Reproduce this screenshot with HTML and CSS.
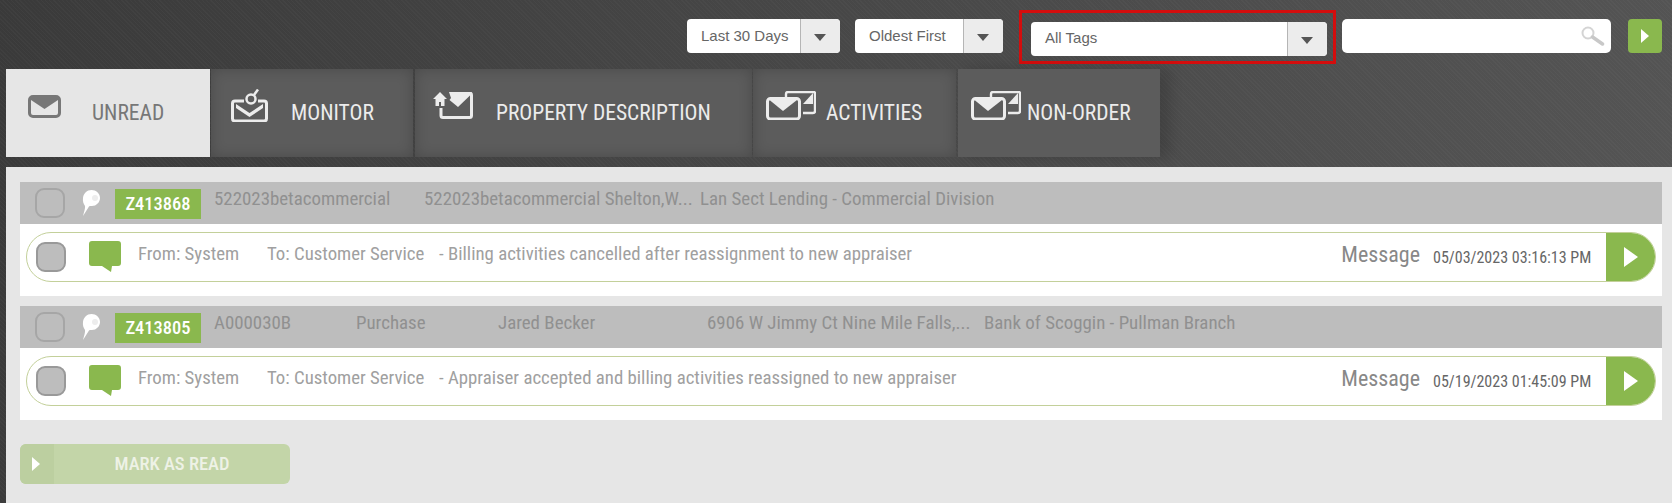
FILE: index.html
```html
<!DOCTYPE html>
<html>
<head>
  <meta charset="utf-8" />
  <title>Inbox</title>
  <link rel="stylesheet" href="styles.css">
</head>
<body>
  <svg class="defs" width="0" height="0">
    <symbol id="mail" viewBox="0 0 33 23">
      <rect x="1.500" y="1.500" width="30" height="20" rx="3.500" fill="none" stroke="currentColor" stroke-width="3"/>
      <path d="M3 3h27v2L16.500 14 3 5z" fill="currentColor"/>
    </symbol>
    <symbol id="mail-pair" viewBox="0 0 50 29">
      <path d="M20 6V3a2 2 0 0 1 2-2h25.500a1.500 1.500 0 0 1 1.500 1.500V20a2 2 0 0 1-2 2H37" fill="none" stroke="currentColor" stroke-width="2.400"/>
      <path d="M37 13L47 2v11z" fill="currentColor"/>
      <rect x="1.500" y="7.500" width="32" height="20.500" rx="3" fill="#5c5c5c" stroke="currentColor" stroke-width="3"/>
      <path d="M3.500 9h27.500L17 20z" fill="currentColor"/>
    </symbol>
    <symbol id="balloon" viewBox="0 0 18 28">
      <path d="M9.500 1C14 1 18 4.500 18 9s-4 8.500-9 8c-1 0-1.500 0-2 .5L1 27c1-4 2.500-8 2-10C1.500 15 .5 12 1 9c.5-4.500 4-8 8.500-8z" fill="#fff"/>
      <circle cx="13" cy="9" r="3" fill="#ededed"/>
    </symbol>
    <symbol id="comment" viewBox="0 0 32 31">
      <path d="M3 0h26a3 3 0 0 1 3 3v19a3 3 0 0 1-3 3h-6l-1 6-9-6H3a3 3 0 0 1-3-3V3a3 3 0 0 1 3-3z" fill="#8ab84e"/>
    </symbol>
  </svg>

  <header class="toolbar">
    <div class="select select-days">
      <span class="select-label">Last 30 Days</span>
      <span class="select-arrow"></span>
    </div>
    <div class="select select-sort">
      <span class="select-label">Oldest First</span>
      <span class="select-arrow"></span>
    </div>
    <div class="highlight">
      <div class="select select-tags">
        <span class="select-label">All Tags</span>
        <span class="select-arrow"></span>
      </div>
    </div>
    <div class="search">
      <svg class="search-icon" viewBox="0 0 26 20" width="26" height="20">
        <circle cx="8" cy="7" r="5.500" fill="#fff" stroke="#d4d4d4" stroke-width="2"/>
        <path d="M12.500 11l10 7" stroke="#c8c8c8" stroke-width="3.500" stroke-linecap="round"/>
      </svg>
    </div>
    <button class="go-btn"><span class="play-small"></span></button>
  </header>

  <nav class="tabs">
    <div class="tab tab-unread active">
      <svg class="tab-icon icon-unread"><use href="#mail"/></svg>
      <span class="tab-label">UNREAD</span>
    </div>
    <div class="tab tab-monitor">
      <svg class="tab-icon icon-monitor" viewBox="0 0 37 33">
        <path d="M13 12H4a2.500 2.500 0 0 0-2.500 2.500v15A2.500 2.500 0 0 0 4 32h29a2.500 2.500 0 0 0 2.500-2.500v-15A2.500 2.500 0 0 0 33 12h-6" fill="none" stroke="currentColor" stroke-width="3"/>
        <path d="M5 15l13.500 9L32 15v4l-13.500 9L5 19z" fill="currentColor"/>
        <circle cx="20" cy="10" r="4.500" fill="none" stroke="currentColor" stroke-width="2.500"/>
        <path d="M23 6l4-5.500" stroke="currentColor" stroke-width="2.500"/>
      </svg>
      <span class="tab-label">MONITOR</span>
    </div>
    <div class="tab tab-property">
      <svg class="tab-icon icon-property" viewBox="0 0 40 27">
        <path d="M7 0L0 7h2.500v7h3.500v-4h2v4h3.500V7H14z" fill="currentColor"/>
        <path d="M8 16v7.500a2 2 0 0 0 2 2h26.500a2 2 0 0 0 2-2V3a2 2 0 0 0-2-2" fill="none" stroke="currentColor" stroke-width="3"/>
        <path d="M16 0h21v3.500L25 15l-8.500-7L18 6z" fill="currentColor"/>
      </svg>
      <span class="tab-label">PROPERTY DESCRIPTION</span>
    </div>
    <div class="tab tab-activities">
      <svg class="tab-icon icon-pair"><use href="#mail-pair"/></svg>
      <span class="tab-label">ACTIVITIES</span>
    </div>
    <div class="tab tab-nonorder">
      <svg class="tab-icon icon-pair"><use href="#mail-pair"/></svg>
      <span class="tab-label">NON-ORDER</span>
    </div>
  </nav>

  <main class="panel">
    <section class="order">
      <div class="order-head">
        <span class="check"></span>
        <svg class="balloon"><use href="#balloon"/></svg>
        <span class="badge">Z413868</span>
        <span class="cell c-loan">522023betacommercial</span>
        <span class="cell c-addr1">522023betacommercial Shelton,W...</span>
        <span class="cell">Lan Sect Lending - Commercial Division</span>
      </div>
      <div class="order-body">
        <div class="message">
          <span class="check check-filled"></span>
          <svg class="comment"><use href="#comment"/></svg>
          <span class="msg-from">From: System</span>
          <span class="msg-to">To: Customer Service</span>
          <span class="msg-text">- Billing activities cancelled after reassignment to new appraiser</span>
          <span class="msg-type">Message</span>
          <span class="msg-date">05/03/2023 03:16:13 PM</span>
          <button class="msg-open"><span class="play"></span></button>
        </div>
      </div>
    </section>

    <section class="order">
      <div class="order-head">
        <span class="check"></span>
        <svg class="balloon"><use href="#balloon"/></svg>
        <span class="badge">Z413805</span>
        <span class="cell c-id">A000030B</span>
        <span class="cell c-type">Purchase</span>
        <span class="cell c-name">Jared Becker</span>
        <span class="cell c-addr2">6906 W Jimmy Ct Nine Mile Falls,...</span>
        <span class="cell">Bank of Scoggin - Pullman Branch</span>
      </div>
      <div class="order-body">
        <div class="message">
          <span class="check check-filled"></span>
          <svg class="comment"><use href="#comment"/></svg>
          <span class="msg-from">From: System</span>
          <span class="msg-to">To: Customer Service</span>
          <span class="msg-text">- Appraiser accepted and billing activities reassigned to new appraiser</span>
          <span class="msg-type">Message</span>
          <span class="msg-date">05/19/2023 01:45:09 PM</span>
          <button class="msg-open"><span class="play"></span></button>
        </div>
      </div>
    </section>

    <button class="mark-read">
      <span class="mark-read-side"><span class="play-small"></span></span>
      <span class="mark-read-label">MARK AS READ</span>
    </button>
  </main>
</body>
</html>
```

FILE: styles.css
```css
* {
  margin: 0;
  padding: 0;
  box-sizing: border-box;
}

body {
  width: 1672px;
  height: 503px;
  overflow: hidden;
  font-family: Roboto, "Liberation Sans", sans-serif;
  background:
    repeating-linear-gradient(45deg, rgba(255, 255, 255, 0.025) 0 1px, transparent 1px 3px),
    linear-gradient(100deg, #3a3a3a 0%, #484848 50%, #555 100%);
}

.defs {
  position: absolute;
}

button {
  border: none;
  font-family: inherit;
}

/* top filters */
.toolbar {
  display: flex;
  align-items: flex-start;
  height: 69px;
  padding: 19px 10px 0 687px;
}

.select {
  display: flex;
  height: 34px;
  background: #fff;
  border-radius: 4px;
  overflow: hidden;
  font-family: "Liberation Sans", sans-serif;
  font-size: 15px;
  color: #666;
}

.select-label {
  flex: 1;
  padding-left: 14px;
  line-height: 33px;
}

.select-arrow {
  position: relative;
  width: 40px;
  background: #ececec;
  border-left: 1px solid #b5b5b5;
}

.select-arrow::after {
  content: '';
  position: absolute;
  top: 15px;
  left: 13px;
  border-left: 6px solid transparent;
  border-right: 6px solid transparent;
  border-top: 7px solid #555;
}

.select-days {
  width: 153px;
  margin-right: 15px;
}

.select-sort {
  width: 148px;
}

.highlight {
  width: 317px;
  height: 54px;
  margin: -9px 0 0 16px;
  padding: 10px 6px 0 9px;
  border: 3px solid #d40d0d;
}

.select-tags {
  height: 34px;
  margin-top: -1px;
}

.select-tags .select-label {
  line-height: 31px;
}

.search {
  display: flex;
  justify-content: flex-end;
  align-items: center;
  width: 269px;
  height: 34px;
  margin-left: 6px;
  padding-right: 5px;
  background: #fff;
  border-radius: 5px;
}

.go-btn {
  display: flex;
  align-items: center;
  justify-content: center;
  width: 34px;
  height: 34px;
  margin-left: 17px;
  background: #8ab84e;
  border-radius: 4px;
}

.play-small {
  border-top: 7px solid transparent;
  border-bottom: 7px solid transparent;
  border-left: 8px solid #fff;
}

/* tabs */
.tabs {
  display: flex;
  gap: 1px;
  height: 88px;
  padding-left: 6px;
}

.tab {
  position: relative;
  height: 88px;
  color: #ececec;
  background: #5c5c5c;
  box-shadow: inset 0 0 14px rgba(0, 0, 0, 0.2);
}

.tab.active {
  color: #777;
  background: #e6e6e6;
  box-shadow: none;
}

.tab-nonorder {
  box-shadow: 10px 0 12px rgba(0, 0, 0, 0.15);
}

.tab-unread { width: 204px; }
.tab-monitor { width: 202px; }
.tab-property { width: 337px; margin-left: 1px; }
.tab-activities { width: 203px; }
.tab-nonorder { width: 202px; margin-left: 1px; }

.tab-label {
  position: absolute;
  top: 31px;
  font-size: 21.500px;
  line-height: 26px;
  white-space: nowrap;
  font-stretch: 75%;
}

.tab-icon {
  position: absolute;
  color: inherit;
}

.tab-unread .tab-label { left: 86px; }
.tab-monitor .tab-label { left: 80px; }
.tab-property .tab-label { left: 81px; }
.tab-activities .tab-label { left: 73px; }
.tab-nonorder .tab-label { left: 69px; }

.icon-unread { left: 22px; top: 26px; width: 33px; height: 23px; }
.icon-monitor { left: 20px; top: 20px; width: 37px; height: 33px; }
.icon-property { left: 18px; top: 23px; width: 40px; height: 27px; }
.icon-pair { left: 13px; top: 22px; width: 50px; height: 29px; }

/* list */
.panel {
  height: 346px;
  margin: 10px 0 0 6px;
  padding: 15px 10px 0 14px;
  background: #e6e6e6;
}

.order {
  margin-bottom: 10px;
}

.order-head {
  display: flex;
  align-items: center;
  height: 42px;
  padding-left: 15px;
  background: #bdbdbd;
}

.check {
  flex: none;
  width: 30px;
  height: 30px;
  border: 2px solid #a6a6a6;
  border-radius: 9px;
}

.check-filled {
  background: #bdbdbd;
  border-color: #999;
}

.balloon {
  flex: none;
  width: 18px;
  height: 28px;
  margin: 0 15px 0 17px;
}

.badge {
  flex: none;
  width: 86px;
  height: 30px;
  background: #8ab84e;
  color: #fff;
  font-size: 18.500px;
  font-weight: 500;
  font-stretch: 85%;
  line-height: 30px;
  text-align: center;
  margin-top: 1px;
}

.cell {
  margin: -10px 0 0 0;
  font-size: 18.900px;
  font-stretch: 85%;
  color: #909090;
  white-space: nowrap;
}

.c-loan { width: 210px; margin-left: 13px; }
.c-addr1 { width: 276px; }
.c-id { width: 142px; margin-left: 13px; }
.c-type { width: 142px; }
.c-name { width: 209px; }
.c-addr2 { width: 277px; }

.order-body {
  height: 72px;
  padding: 8px 6px 0 6px;
  background: #fff;
}

.message {
  display: flex;
  align-items: center;
  height: 50px;
  padding-left: 9px;
  border: 1px solid #c3d09a;
  border-radius: 25px;
  overflow: hidden;
  font-size: 18.800px;
  font-stretch: 85%;
  color: #a0a0a0;
  white-space: nowrap;
}

.comment {
  flex: none;
  width: 32px;
  height: 31px;
  margin: -2px 0 0 23px;
}

.msg-from,
.msg-to,
.msg-text {
  margin-top: -7px;
}

.msg-from { margin-left: 17px; width: 129px; }
.msg-to { width: 172px; }
.msg-text { flex: 1; }

.msg-type {
  margin-top: -5px;
  font-size: 22px;
  color: #888;
  margin-right: 13px;
}

.msg-date {
  width: 173px;
  font-size: 16px;
  color: #666;
}

.msg-open {
  display: flex;
  align-items: center;
  justify-content: center;
  flex: none;
  width: 49px;
  height: 50px;
  background: #8ab84e;
}

.play {
  border-top: 10px solid transparent;
  border-bottom: 10px solid transparent;
  border-left: 14px solid #fff;
}

.mark-read {
  display: flex;
  width: 270px;
  height: 40px;
  margin-top: 24px;
  background: #c3d5a8;
  border-radius: 6px;
  overflow: hidden;
  color: #eef2e6;
}

.mark-read-side {
  display: flex;
  align-items: center;
  justify-content: center;
  width: 34px;
  height: 100%;
  padding-right: 2px;
  background: #bccfa0;
}

.mark-read-label {
  flex: 1;
  font-size: 18.500px;
  font-weight: 500;
  font-stretch: 85%;
  line-height: 40px;
}
```
